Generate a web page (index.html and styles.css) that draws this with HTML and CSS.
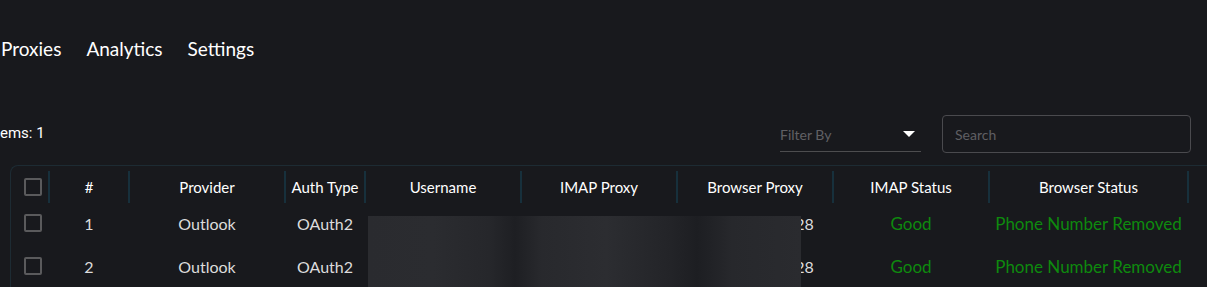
FILE: index.html
```html
<!DOCTYPE html>
<html lang="en">
  <head>
    <meta charset="UTF-8" />
    <meta name="viewport" content="width=device-width, initial-scale=1.0" />
    <title>Accounts</title>
    <link rel="stylesheet" href="styles.css">
  </head>

  <body>
    <div class="page">
      <nav class="nav">
        <a href="#">Proxies</a>
        <a href="#">Analytics</a>
        <a href="#">Settings</a>
      </nav>

      <div class="toolbar">
        <div class="count">Items: 1</div>
        <div class="tools">
          <div class="filter">
            <span>Filter By</span>
            <span class="caret"></span>
          </div>
          <input class="search" type="text" placeholder="Search" />
        </div>
      </div>

      <div class="grid">
        <div class="row head">
          <div class="cell c-check"><span class="box"></span></div>
          <div class="cell c-num">#</div>
          <div class="cell c-wide">Provider</div>
          <div class="cell c-num">Auth Type</div>
          <div class="cell c-wide">Username</div>
          <div class="cell c-wide">IMAP Proxy</div>
          <div class="cell c-wide">Browser Proxy</div>
          <div class="cell c-wide">IMAP Status</div>
          <div class="cell c-status">Browser Status</div>
        </div>
        <div class="row">
          <div class="cell c-check"><span class="box"></span></div>
          <div class="cell c-num">1</div>
          <div class="cell c-wide">Outlook</div>
          <div class="cell c-num">OAuth2</div>
          <div class="cell c-wide">hidden</div>
          <div class="cell c-wide">hidden</div>
          <div class="cell c-wide">000.000.00.0:28</div>
          <div class="cell c-wide good">Good</div>
          <div class="cell c-status good">Phone Number Removed</div>
        </div>
        <div class="row">
          <div class="cell c-check"><span class="box"></span></div>
          <div class="cell c-num">2</div>
          <div class="cell c-wide">Outlook</div>
          <div class="cell c-num">OAuth2</div>
          <div class="cell c-wide">hidden</div>
          <div class="cell c-wide">hidden</div>
          <div class="cell c-wide">000.000.00.0:28</div>
          <div class="cell c-wide good">Good</div>
          <div class="cell c-status good">Phone Number Removed</div>
        </div>
      </div>

      <!-- blurred-out private data -->
      <div class="redact"></div>
    </div>
  </body>
</html>
```

FILE: styles.css
```css
* {
  margin: 0;
  padding: 0;
  box-sizing: border-box;
}

body {
  height: 100vh;
  width: 100vw;
  overflow: hidden;
  background: #18191d;
  color: #fff;
  font-family: "Lato", "Noto Sans", sans-serif;
}

.page {
  position: relative;
  height: 100%;
  width: 100%;
}

.nav {
  height: 96px;
  display: flex;
  align-items: center;
  gap: 25px;
  padding-left: 1px;
}

.nav a {
  color: #fff;
  text-decoration: none;
  font-size: 19px;
}

.toolbar {
  margin-top: 19px;
  height: 38px;
  display: flex;
  justify-content: space-between;
  align-items: center;
  padding-right: 16px;
}

.count {
  font-family: "Roboto", sans-serif;
  font-size: 15px;
  margin-left: -9px;
  margin-top: -2px;
}

.tools {
  display: flex;
  align-items: center;
  gap: 21px;
}

.filter {
  width: 141px;
  height: 36px;
  display: flex;
  justify-content: space-between;
  align-items: center;
  border-bottom: 1px solid #4d4d4f;
  padding-top: 2px;
  padding-right: 6px;
  color: #606064;
  font-size: 14px;
}

.caret {
  width: 0;
  height: 0;
  border-left: 6px solid transparent;
  border-right: 6px solid transparent;
  border-top: 6px solid #fff;
  margin-top: -2px;
}

.search {
  width: 249px;
  height: 38px;
  background: transparent;
  border: 1px solid #4a4a4e;
  border-radius: 4px;
  padding: 0 12px;
  font-family: "Lato", sans-serif;
  font-size: 14px;
  color: #fff;
  outline: none;
}

.search::placeholder {
  color: #5f5f63;
}

.grid {
  margin-top: 12px;
  margin-left: 10px;
  width: 1260px;
  border: 1px solid #1d2b33;
  border-right: none;
  border-bottom: none;
  border-top-left-radius: 8px;
}

.row {
  display: flex;
  height: 43px;
  align-items: center;
  color: #dcdcdc;
  font-size: 16px;
}

.row.head {
  height: 36px;
  padding-top: 6px;
  color: #fff;
  font-size: 15px;
}

.cell {
  position: relative;
  display: flex;
  justify-content: center;
  align-items: center;
  height: 100%;
  white-space: nowrap;
}

.head .cell::after {
  content: "";
  position: absolute;
  right: -1px;
  top: -1px;
  width: 2px;
  height: 32px;
  background: #17303c;
}

.c-check {
  width: 38px;
  justify-content: flex-start;
  padding-left: 13px;
}

.c-num {
  width: 80px;
}

.c-wide {
  width: 156px;
}

.c-status {
  width: 199px;
}

.box {
  width: 18px;
  height: 18px;
  border: 2px solid #5a5a5c;
  border-radius: 2px;
}

.row .c-check .box {
  margin-top: -1px;
}

.good {
  color: #0e8a0e;
  font-size: 17px;
}

.redact {
  position: absolute;
  left: 368px;
  top: 216px;
  width: 433px;
  height: 80px;
  background: linear-gradient(90deg, #2a2b2f 0%, #2b2c30 15%, #26272b 28%, #1e1f23 34%, #28292d 40%, #2c2d31 55%, #232428 70%, #1d1e22 76%, #27282c 84%, #2a2b2f 100%);
}
```
